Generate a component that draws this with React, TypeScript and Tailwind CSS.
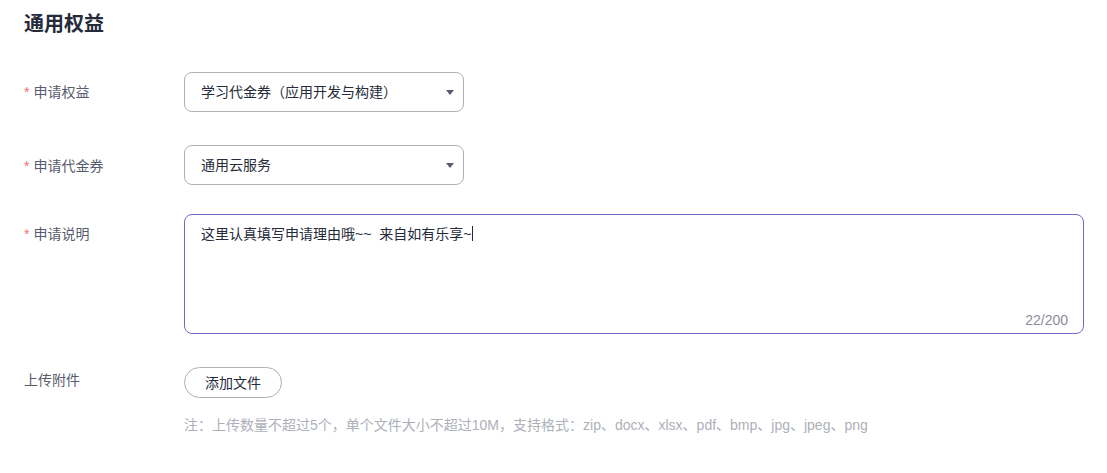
const font = "font-['Liberation_Sans','Noto_Sans_CJK_SC',sans-serif]";

function Label({ text, required = true, className = "" }: { text: string; required?: boolean; className?: string }) {
  return (
    <div className={`w-[160px] shrink-0 text-[14px] leading-5 text-[#575d6c] ${className}`}>
      {required && <span className="mr-[4px] text-[#f66f6a]">*</span>}
      {text}
    </div>
  );
}

function Select({ value }: { value: string }) {
  return (
    <div className="flex h-10 w-[280px] items-center justify-between rounded-lg border border-[#adb0b8] bg-white pl-[16px] pr-[8px]">
      <span className="text-[14px] leading-5 text-[#252b3a]">{value}</span>
      <svg width="8" height="5" viewBox="0 0 8 5" className="mr-[1px]">
        <path d="M0 0h8L4 5z" fill="#575d6c" />
      </svg>
    </div>
  );
}

export default function App() {
  return (
    <div className={`min-h-[473px] bg-white pl-6 pr-[23px] pt-[9px] ${font}`}>
      <h2 className="text-[20px] font-bold leading-[30px] text-[#252b3a]">通用权益</h2>

      <div className="mt-[33px] flex items-start">
        <Label text="申请权益" className="pt-[10px]" />
        <Select value="学习代金券（应用开发与构建）" />
      </div>

      <div className="mt-[33px] flex items-start">
        <Label text="申请代金券" className="pt-[11px]" />
        <Select value="通用云服务" />
      </div>

      <div className="mt-[29px] flex items-start">
        <Label text="申请说明" className="pt-[10px]" />
        <div className="relative h-[120px] flex-1 rounded-lg border border-[#6e6bc7] bg-white px-[16px] pt-[9px]">
          <p className="whitespace-pre text-[14px] leading-5 text-[#252b3a]">
            {"这里认真填写申请理由哦~~  来自如有乐享~"}
            <span className="ml-px inline-block h-[15px] w-px translate-y-[2px] bg-[#252b3a]" />
          </p>
          <span className="absolute bottom-[3px] right-[15px] text-[14px] leading-5 text-[#8a8e99]">22/200</span>
        </div>
      </div>

      <div className="mt-[33px] flex items-start">
        <Label text="上传附件" required={false} className="pt-[3px]" />
        <div className="flex flex-col items-start">
          <button className="h-[31px] w-[98px] rounded-full border border-[#adb0b8] bg-white text-[14px] leading-5 text-[#252b3a]">
            添加文件
          </button>
          <p className="mt-[17px] text-[14px] leading-5 text-[#adb0b8]">
            注：上传数量不超过5个，单个文件大小不超过10M，支持格式：zip、docx、xlsx、pdf、bmp、jpg、jpeg、png
          </p>
        </div>
      </div>
    </div>
  );
}
